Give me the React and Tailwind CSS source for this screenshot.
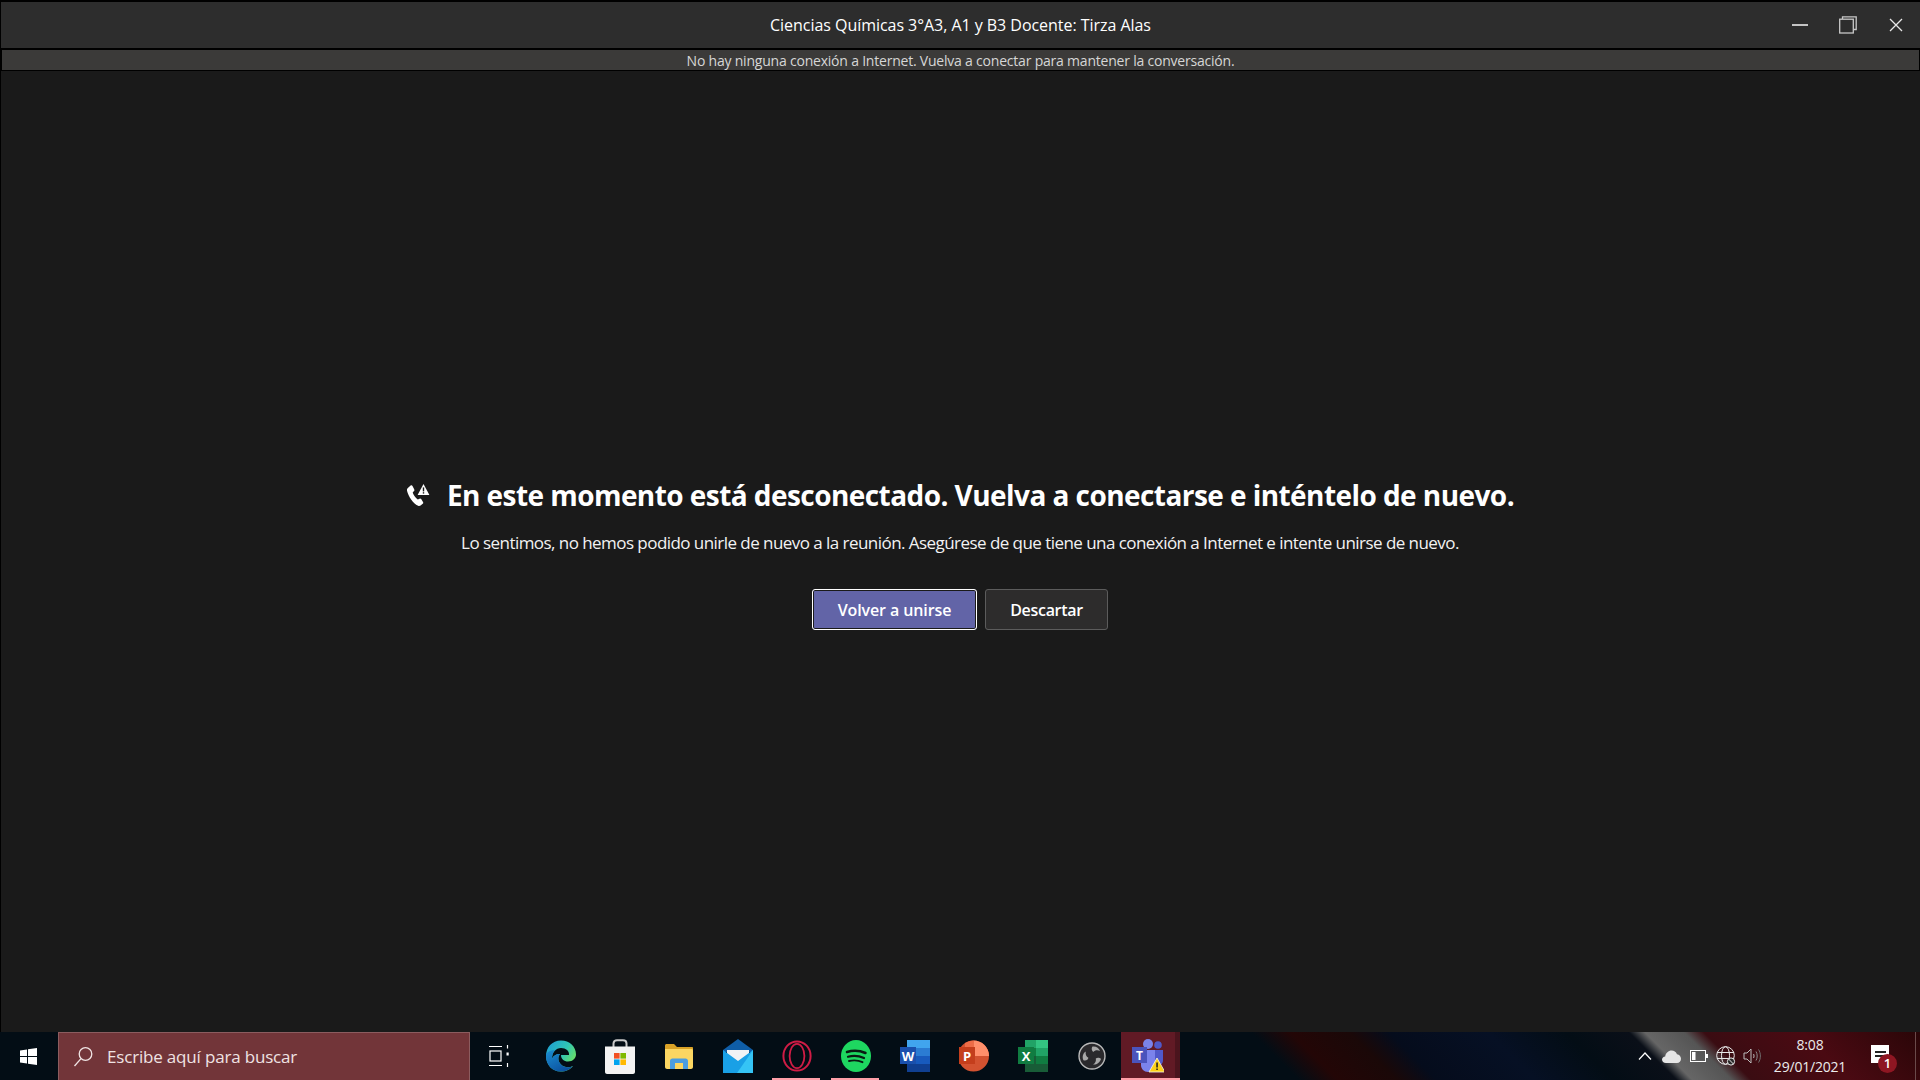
import React from 'react';

const font = { fontFamily: '"Open Sans", "Noto Sans", sans-serif' };

const PhoneWarning = () => (
    <svg width="24" height="24" viewBox="0 0 24 24" fill="white" className="shrink-0">
        <path d="M1.6 5.2 L4.6 2.6 C5.3 2 6.1 2.2 6.5 3 L8.3 6.4 C8.6 7 8.5 7.6 8 8.1 L6.7 9.5 C7.6 12 9.3 14.6 11.8 16.5 L13.6 15.7 C14.2 15.4 14.8 15.6 15.2 16.1 L17 19 C17.4 19.7 17.3 20.4 16.7 20.8 L14.6 22.6 C13.9 23.1 13 23.2 12.1 22.8 C6.8 20 2.6 14 1 7.7 C0.8 6.7 1 5.8 1.6 5.2 Z" />
        <path d="M17.5 1 L23.4 12 L11.6 12 Z" />
        <rect x="16.8" y="4.4" width="1.4" height="4" fill="#1a1a1a" />
        <rect x="16.8" y="9.2" width="1.4" height="1.4" fill="#1a1a1a" />
    </svg>
);

const SearchIcon = () => (
    <svg width="22" height="22" viewBox="0 0 22 22" fill="none" stroke="#f0e4e4" strokeWidth="1.3">
        <circle cx="13.5" cy="8" r="6.3" />
        <path d="M9 12.6 L2.5 20" />
    </svg>
);

const WindowsLogo = () => (
    <svg width="17" height="17" viewBox="0 0 17 17" fill="white" className="mr-[2px]">
        <path d="M0 2.4 L7 1.4 V8 H0 Z M8 1.2 L17 0 V8 H8 Z M0 9 H7 V15.6 L0 14.6 Z M8 9 H17 V17 L8 15.8 Z" />
    </svg>
);

const TaskView = () => (
    <svg width="20" height="22" viewBox="0 0 20 22" fill="none" stroke="white" strokeWidth="1.2" className="mr-[6px]">
        <path d="M0 1.5 H13 M0 20.5 H13 M18.5 0 V3.5 M18.5 18 V22" />
        <rect x="1" y="6" width="11" height="10" />
        <rect x="17.5" y="7.5" width="2.2" height="3" fill="white" stroke="none" />
    </svg>
);

const EdgeIcon = () => (
    <svg width="30" height="32" viewBox="0 0 30 32">
        <defs>
            <linearGradient id="edgeTop" x1="0" y1="0" x2="1" y2="0.6">
                <stop offset="0" stopColor="#1b9ad6" />
                <stop offset="0.6" stopColor="#2fc5b5" />
                <stop offset="1" stopColor="#6fe05e" />
            </linearGradient>
            <linearGradient id="edgeLow" x1="0" y1="0" x2="0.7" y2="1">
                <stop offset="0" stopColor="#1b8ed2" />
                <stop offset="1" stopColor="#0b4f9e" />
            </linearGradient>
        </defs>
        <path d="M15 0.5 C6 0.5 0 7.5 0 16 C0 25 6.5 31.5 14.5 31.5 C20 31.5 24.5 29.5 27 26 C23 28 18 27.5 15 24.5 C12 21.5 11.5 17 14 14 C10 14 7 16 6 19 C6 12 10 8 15 8 C20 8 23.5 11 23 15 L15 15 C15 19 18 21.5 22 21.5 C27 21.5 30 18 30 14.5 C30 6.5 23.5 0.5 15 0.5 Z" fill="url(#edgeTop)" />
        <path d="M0 16 C0 25 6.5 31.5 14.5 31.5 C20 31.5 24.5 29.5 27 26 C23 28 18 27.5 15 24.5 C12 21.5 11.5 17 14 14 C10 14 7 16 6 19 C6 15 7 12 9 10 C4 10.5 0 12 0 16 Z" fill="url(#edgeLow)" />
    </svg>
);

const StoreIcon = () => (
    <svg width="30" height="35" viewBox="0 0 30 35">
        <path d="M8.5 9 V4.5 C8.5 2.5 10 1.2 12 1.2 H18 C20 1.2 21.5 2.5 21.5 4.5 V9" fill="none" stroke="#c9c9c9" strokeWidth="2" />
        <path d="M0 7.5 H30 V33 C30 34 29 35 28 35 H2 C1 35 0 34 0 33 Z" fill="#f3f3f3" />
        <rect x="9" y="14" width="5.6" height="5.6" fill="#f25022" />
        <rect x="15.4" y="14" width="5.6" height="5.6" fill="#7fba00" />
        <rect x="9" y="20.4" width="5.6" height="5.6" fill="#00a4ef" />
        <rect x="15.4" y="20.4" width="5.6" height="5.6" fill="#ffb900" />
    </svg>
);

const FolderIcon = () => (
    <svg width="28" height="25" viewBox="0 0 28 25">
        <path d="M0 1.5 C0 .7 .7 0 1.5 0 H9 L12 3 H27 C27.6 3 28 3.4 28 4 V6 H0 Z" fill="#d9a227" />
        <path d="M0 5 H26.6 C27.4 5 28 5.6 28 6.4 V23 C28 24 27 25 26 25 H2 C1 25 0 24 0 23 Z" fill="#fbd662" />
        <path d="M5 25 V17 C5 15.5 6 14.5 7.5 14.5 H20.5 C22 14.5 23 15.5 23 17 V25 H18 V19 H10 V25 Z" fill="#4a9de0" />
    </svg>
);

const MailIcon = () => (
    <svg width="30" height="34" viewBox="0 0 30 34">
        <path d="M0 11 L15 0 L30 11 V13 H0 Z" fill="#0f5ea8" />
        <path d="M4 11 H26 V16 L15 24 L4 16 Z" fill="#f1f3f5" />
        <path d="M0 11 L15 22 L30 11 V34 H0 Z" fill="#19a0e6" />
        <path d="M30 11 V34 H14 Z" fill="#35c4f5" />
    </svg>
);

const OperaIcon = () => (
    <svg width="30" height="32" viewBox="0 0 30 32" fill="none" stroke="#cf1c45">
        <ellipse cx="15" cy="16" rx="13.6" ry="14.6" strokeWidth="2" />
        <ellipse cx="15" cy="16" rx="7.4" ry="12.2" strokeWidth="1.8" />
    </svg>
);

const SpotifyIcon = () => (
    <svg width="30" height="32" viewBox="0 0 30 32" fill="none">
        <ellipse cx="15" cy="16" rx="15" ry="16" fill="#1ed760" />
        <path d="M6 12 C12 10 19 10.5 24.5 13" stroke="#0a1a12" strokeWidth="2.5" strokeLinecap="round" />
        <path d="M7 16.8 C12 15.4 18 15.8 23 18" stroke="#0a1a12" strokeWidth="2.2" strokeLinecap="round" />
        <path d="M8 21 C12.5 20 17.5 20.3 21.5 22.2" stroke="#0a1a12" strokeWidth="1.9" strokeLinecap="round" />
    </svg>
);

const WordIcon = () => (
    <svg width="30" height="32" viewBox="0 0 30 32">
        <rect x="7" y="0" width="23" height="8" fill="#41a5ee" />
        <rect x="7" y="8" width="23" height="8" fill="#2b7cd3" />
        <rect x="7" y="16" width="23" height="8" fill="#185abd" />
        <rect x="7" y="24" width="23" height="8" fill="#103f91" />
        <rect x="0" y="7" width="16" height="17" fill="#1a50ad" />
        <text x="8" y="20.5" textAnchor="middle" fontSize="13" fontWeight="700" fill="white" fontFamily="Open Sans, sans-serif">W</text>
    </svg>
);

const PowerPointIcon = () => (
    <svg width="30" height="32" viewBox="0 0 30 32">
        <circle cx="14.5" cy="16" r="15.5" fill="#d35230" />
        <path d="M14.5 .5 A15.5 15.5 0 0 1 30 16 H14.5 Z" fill="#ff8f6b" />
        <path d="M14.5 .5 V16 H6 V3 A15 15 0 0 1 14.5 .5 Z" fill="#ed6c47" />
        <rect x="0" y="7" width="16" height="17" fill="#c43e1c" />
        <text x="8" y="20.5" textAnchor="middle" fontSize="13" fontWeight="700" fill="white" fontFamily="Open Sans, sans-serif">P</text>
    </svg>
);

const ExcelIcon = () => (
    <svg width="30" height="32" viewBox="0 0 30 32">
        <rect x="7" y="0" width="12" height="8" fill="#21a366" />
        <rect x="18" y="0" width="12" height="8" fill="#33c481" />
        <rect x="7" y="8" width="12" height="8" fill="#107c41" />
        <rect x="18" y="8" width="12" height="8" fill="#21a366" />
        <rect x="7" y="16" width="12" height="8" fill="#185c37" />
        <rect x="18" y="16" width="12" height="8" fill="#107c41" />
        <rect x="7" y="24" width="23" height="8" fill="#185c37" />
        <rect x="0" y="7" width="16" height="17" fill="#107c41" />
        <text x="8" y="20.5" textAnchor="middle" fontSize="13" fontWeight="700" fill="white" fontFamily="Open Sans, sans-serif">X</text>
    </svg>
);

const ObsIcon = () => (
    <svg width="28" height="28" viewBox="0 0 28 28">
        <circle cx="14" cy="14" r="13" fill="#2a292c" stroke="#b8b8b8" strokeWidth="1.4" />
        <path d="M14.5 4.5 C18 4 21 6 22 9 C19.5 7.8 16.8 8.2 15.3 10 C14 9 13 6.5 14.5 4.5 Z" fill="#a8a8a8" />
        <path d="M23 17 C21.8 20.5 18.5 23 15 22.5 C17.2 21.2 18.4 18.6 17.8 16.4 C19.3 15.6 21.6 15.6 23 17 Z" fill="#a8a8a8" />
        <path d="M5.4 18.2 C4 15 4.8 11 7.8 9.4 C7.2 12 8.2 14.6 10.4 15.8 C10.2 17.6 8 19.2 5.4 18.2 Z" fill="#a8a8a8" />
    </svg>
);

const TeamsIcon = () => (
    <svg width="32" height="34" viewBox="0 0 32 34">
        <circle cx="26" cy="6" r="3.8" fill="#5059c9" />
        <path d="M20 11 H31 V21 C31 25 28 27 25 27 H20 Z" fill="#5059c9" />
        <circle cx="16" cy="5" r="5" fill="#7b83eb" />
        <path d="M9 11 H23 V26 C23 30 19 33 16 33 C12 33 9 30 9 26 Z" fill="#7b83eb" />
        <rect x="0" y="8" width="15" height="16" fill="#4b53bc" />
        <text x="7.5" y="21" textAnchor="middle" fontSize="12" fontWeight="700" fill="white" fontFamily="Open Sans, sans-serif">T</text>
        <path d="M25 19 L33 33 H17 Z" fill="#fcd116" stroke="#f2f2f2" strokeWidth="0.8" />
        <rect x="24.3" y="23.5" width="1.5" height="5" fill="#1a1a1a" />
        <rect x="24.3" y="29.5" width="1.5" height="1.5" fill="#1a1a1a" />
    </svg>
);

const Chevron = () => (
    <svg width="14" height="8" viewBox="0 0 14 8" fill="none" stroke="white" strokeWidth="1.2">
        <path d="M1 7.5 L7 1 L13 7.5" />
    </svg>
);

const Cloud = () => (
    <svg width="19" height="13" viewBox="0 0 19 13" fill="#e6e6e6">
        <path d="M4 13 C1.5 13 0 11.5 0 9.6 C0 7.8 1.4 6.4 3.2 6.4 C3.8 3 6.4 .6 9.6 .6 C12 .6 14 2 15 4.2 C17.4 4.6 19 6.4 19 8.8 C19 11.2 17.4 13 15 13 Z" />
    </svg>
);

const Battery = () => (
    <svg width="18" height="12" viewBox="0 0 18 12" fill="none" stroke="white" strokeWidth="1">
        <rect x=".5" y=".5" width="15" height="11" />
        <rect x="2" y="2" width="3.5" height="8" fill="white" stroke="none" />
        <rect x="16" y="4" width="2" height="4" fill="white" stroke="none" />
    </svg>
);

const Globe = () => (
    <svg width="20" height="22" viewBox="0 0 20 22" fill="none" stroke="#e8e8e8" strokeWidth="1">
        <circle cx="9.5" cy="10.5" r="8.8" />
        <ellipse cx="9.5" cy="10.5" rx="4" ry="8.8" />
        <path d="M1 7.5 H18 M1 13.5 H18" />
        <circle cx="15" cy="16.5" r="3.6" fill="#2a2a2a" stroke="#e8e8e8" />
        <path d="M12.6 14 L17.4 19" />
    </svg>
);

const Speaker = () => (
    <svg width="19" height="18" viewBox="0 0 19 18" fill="none" stroke="#bdbdbd" strokeWidth="1">
        <path d="M1 6 H4 L8 2 V16 L4 12 H1 Z" />
        <path d="M10.5 7 C11.2 8 11.2 10 10.5 11" />
        <path d="M13 4.5 C14.6 7 14.6 11 13 13.5" stroke="#8c8c8c" />
        <path d="M15.5 2.5 C18 6 18 12 15.5 15.5" stroke="#6f6f6f" />
    </svg>
);

const NotificationIcon = () => (
    <div className="relative w-[18px] h-[18px] bg-white flex flex-col gap-[2px] items-center justify-center">
        <div className="w-[11px] h-[2px] bg-[#222]" />
        <div className="w-[11px] h-[2px] bg-[#222]" />
        <div className="absolute left-[7px] top-[9px] w-[19px] h-[19px] rounded-full bg-[#8e1622] text-white text-[13px] font-semibold flex items-center justify-center leading-none">1</div>
    </div>
);

const pinned = [
    { key: 'taskview', icon: <TaskView /> },
    { key: 'edge', icon: <EdgeIcon /> },
    { key: 'store', icon: <StoreIcon /> },
    { key: 'files', icon: <FolderIcon /> },
    { key: 'mail', icon: <MailIcon /> },
    { key: 'opera', icon: <OperaIcon />, running: true },
    { key: 'spotify', icon: <SpotifyIcon />, running: true },
    { key: 'word', icon: <WordIcon /> },
    { key: 'powerpoint', icon: <PowerPointIcon /> },
    { key: 'excel', icon: <ExcelIcon /> },
    { key: 'obs', icon: <ObsIcon /> },
];

const tray = [<Chevron key="chevron" />, <Cloud key="cloud" />, <Battery key="battery" />, <Globe key="globe" />, <Speaker key="speaker" />];

const App = () => {
    return (
        <div className="h-screen w-full overflow-hidden flex flex-col bg-black text-white" style={font}>
            <div className="pt-[2px] pl-px shrink-0">
                <div className="h-[46px] bg-[#2d2d2d] grid grid-cols-[1fr_auto_1fr] items-center">
                    <div />
                    <div className="text-[16px] tracking-[-0.04px] text-white">Ciencias Químicas 3°A3, A1 y B3 Docente: Tirza Alas</div>
                    <div className="flex justify-end h-full">
                        <div className="w-12 flex items-center justify-center">
                            <div className="w-4 h-[2px] bg-[#c4c4c4]" />
                        </div>
                        <div className="w-12 flex items-center justify-center">
                            <svg width="18" height="18" viewBox="0 0 18 18" fill="none" stroke="#c8c8c8" strokeWidth="1.3">
                                <path d="M3.5 3 V.8 H17.2 V13.5 H14.5" />
                                <rect x=".7" y="3.2" width="13.6" height="13.8" />
                            </svg>
                        </div>
                        <div className="w-12 flex items-center justify-center">
                            <svg width="14" height="14" viewBox="0 0 14 14" fill="none" stroke="#e8e8e8" strokeWidth="1.3">
                                <path d="M1 1 L13 13 M13 1 L1 13" />
                            </svg>
                        </div>
                    </div>
                </div>
            </div>

            <div className="mt-[2px] ml-[2px] mr-px h-5 shrink-0 bg-[#3b3a39] flex items-center justify-center text-[14px] tracking-[-0.21px] text-[#d6d6d6]">
                No hay ninguna conexión a Internet. Vuelva a conectar para mantener la conversación.
            </div>

            <main className="flex-1 mt-px ml-px pr-px pt-1 bg-[#1a1a1a] flex flex-col items-center justify-center">
                <div className="flex items-center gap-[17px]">
                    <PhoneWarning />
                    <h1 className="text-[28px] leading-9 font-bold tracking-[-0.56px]">En este momento está desconectado. Vuelva a conectarse e inténtelo de nuevo.</h1>
                </div>
                <p className="mt-[18px] text-[17px] leading-6 tracking-[-0.55px] text-[#f2f2f2]">
                    Lo sentimos, no hemos podido unirle de nuevo a la reunión. Asegúrese de que tiene una conexión a Internet e intente unirse de nuevo.
                </p>
                <div className="mt-[34px] flex gap-2">
                    <button className="w-[165px] h-[41px] rounded-[3px] bg-[#6264a7] border border-white ring-1 ring-inset ring-[#1a1a1a] text-[16px] font-semibold tracking-[-0.1px] text-white">Volver a unirse</button>
                    <button className="w-[123px] h-[41px] rounded-[3px] bg-[#2d2c2c] border border-[#5c5c5c] text-[16px] font-semibold tracking-[-0.3px] text-white">Descartar</button>
                </div>
            </main>

            <footer className="h-12 shrink-0 flex items-stretch bg-[#030d15] bg-[linear-gradient(45deg,#030d15_0%,#030d15_66%,#230606_68%,#1a0808_71%,#050c1c_73%,#061024_78%,#030d15_82%,#0a0f18_85.2%,#666666_86%,#555555_88%,#3a0c12_89%,#4a0a12_94%,#2a0608_100%)]">
                <div className="w-[58px] flex items-center justify-center">
                    <WindowsLogo />
                </div>
                <div className="w-[412px] bg-[#723539] border-t border-x border-[#8c5c5f] flex items-center gap-[13px] pl-[13px] text-[#efe3e3] text-[17px] tracking-[-0.18px]">
                    <SearchIcon />
                    <span>Escribe aquí para buscar</span>
                </div>
                <div className="ml-[2px] flex">
                    {pinned.map((app) => (
                        <div key={app.key} className="relative w-[59px] flex items-center justify-center">
                            {app.icon}
                            {app.running && <div className="absolute bottom-0 left-[5px] right-[6px] h-[2px] bg-[#ff9fa8]" />}
                        </div>
                    ))}
                    <div className="relative w-[59px] bg-[#611a25] flex items-center justify-center border-r-[5px] border-[#4a141d]">
                        <TeamsIcon />
                        <div className="absolute bottom-0 left-0 -right-[5px] h-[2px] bg-[#ff9fa8]" />
                    </div>
                </div>
                <div className="ml-auto flex items-center">
                    <div className="flex items-center mr-px">
                        {tray.map((icon) => (
                            <div key={icon.key} className="w-[27px] flex items-center justify-center">{icon}</div>
                        ))}
                    </div>
                    <div className="w-[86px] flex flex-col items-center text-[14px] tracking-[-0.2px] leading-[22px] text-[#ececec]">
                        <span>8:08</span>
                        <span>29/01/2021</span>
                    </div>
                    <div className="w-[62px] pl-[18px] pb-[4px] flex items-center">
                        <NotificationIcon />
                    </div>
                    <div className="w-px self-stretch bg-[#6a4a4a] mr-1" />
                </div>
            </footer>
        </div>
    );
};

export default App;
